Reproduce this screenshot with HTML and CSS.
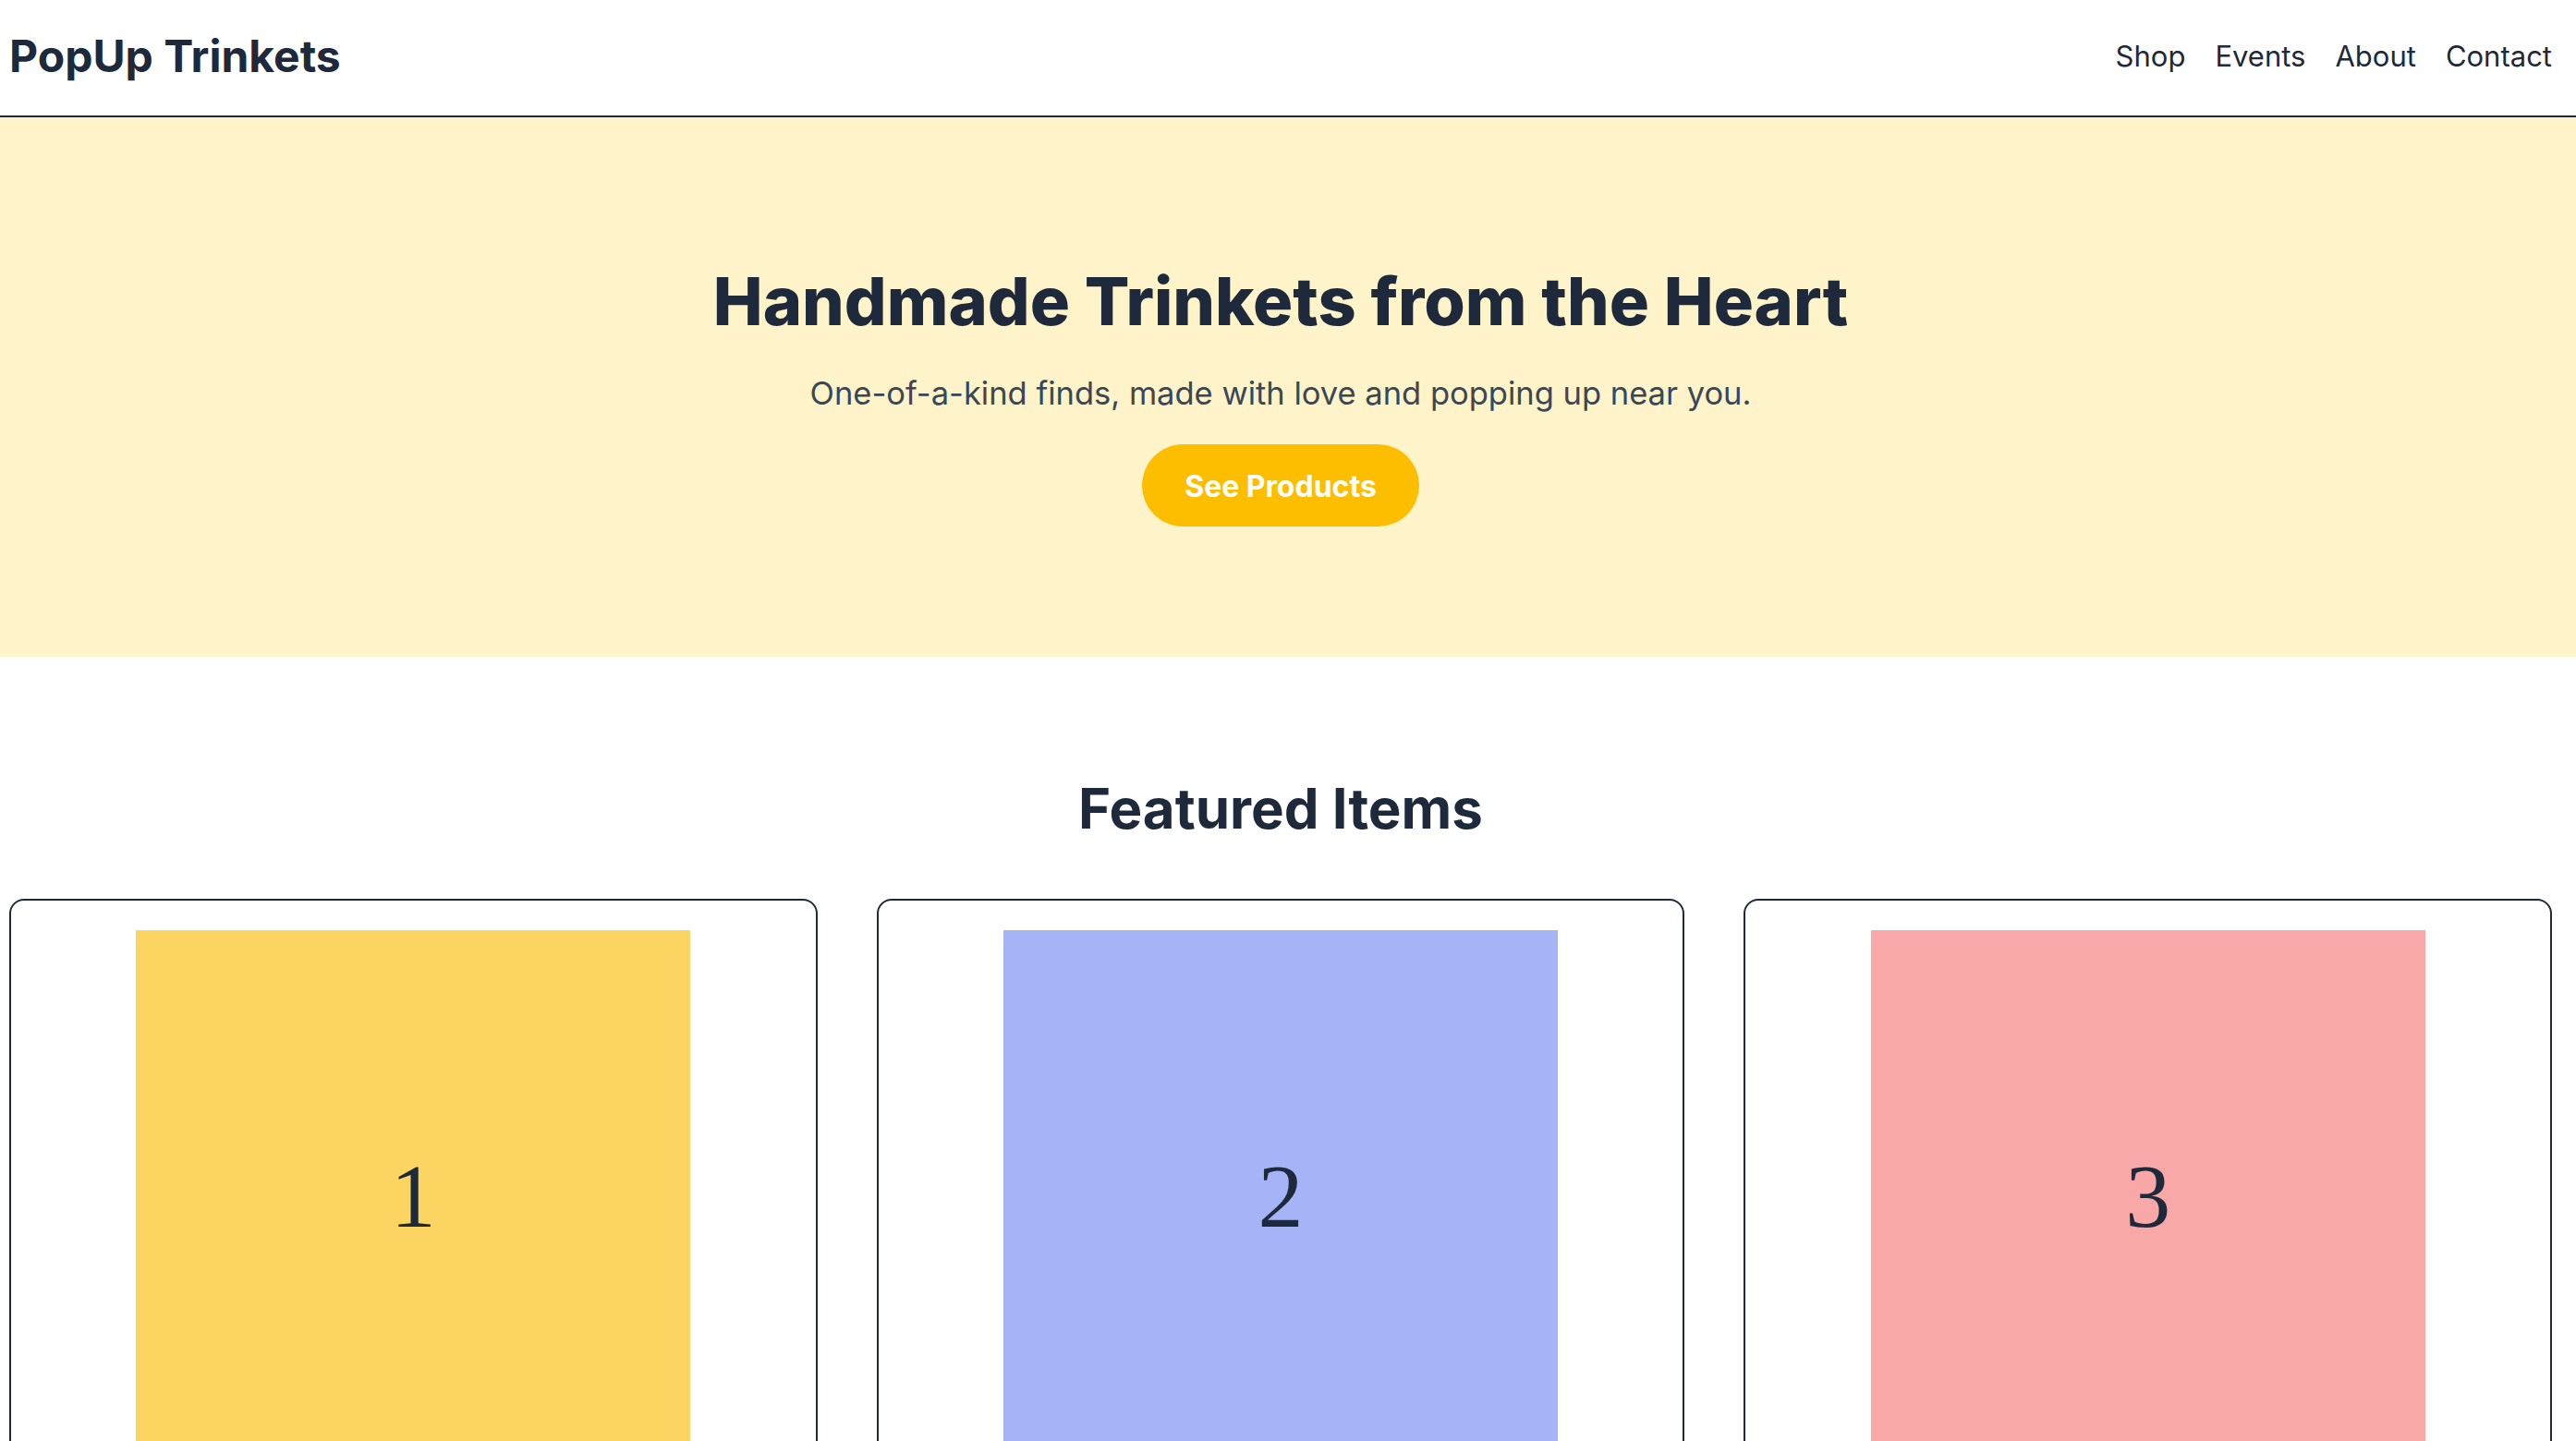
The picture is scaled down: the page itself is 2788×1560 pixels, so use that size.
FILE: index.html
```html
<!DOCTYPE html>
<html lang="en">
<head>
<meta charset="utf-8">
<title>PopUp Trinkets</title>
<link rel="stylesheet" href="styles.css">
</head>
<body>
<header class="site-header">
  <div class="logo">PopUp Trinkets</div>
  <nav class="nav">
    <a href="#">Shop</a>
    <a href="#">Events</a>
    <a href="#">About</a>
    <a href="#">Contact</a>
  </nav>
</header>
<section class="hero">
  <h1 class="hero-title">Handmade Trinkets from the Heart</h1>
  <p class="hero-sub">One-of-a-kind finds, made with love and popping up near you.</p>
  <a class="btn" href="#">See Products</a>
</section>
<section class="featured">
  <h2 class="featured-title">Featured Items</h2>
  <div class="cards">
    <div class="card"><div class="thumb thumb-1">1</div></div>
    <div class="card"><div class="thumb thumb-2">2</div></div>
    <div class="card"><div class="thumb thumb-3">3</div></div>
  </div>
</section>
</body>
</html>
```
FILE: styles.css
```css
* { box-sizing: border-box; }
html, body { margin: 0; padding: 0; }
body {
  font-family: Inter, "Noto Sans", sans-serif;
  color: #1e293b;
  background: #ffffff;
}
.site-header {
  height: 127px;
  display: flex;
  align-items: center;
  justify-content: space-between;
  padding: 0 26px 4px 10px;
  border-bottom: 2px solid #1e293b;
}
.logo {
  font-size: 48px;
  font-weight: 700;
}
.nav {
  display: flex;
  gap: 32px;
}
.nav a {
  color: #1e293b;
  text-decoration: none;
  font-size: 31px;
}
.hero {
  background: #fef3c9;
  padding: 156px 26px 141px 10px;
  display: flex;
  flex-direction: column;
  align-items: center;
  text-align: center;
}
.hero-title {
  margin: 0 0 30px;
  font-size: 72px;
  line-height: 1.2;
  font-weight: 800;
  letter-spacing: 0;
}
.hero-sub {
  margin: 0 0 28px;
  font-size: 34.5px;
  line-height: 54px;
  color: #3b4656;
}
.btn {
  display: inline-block;
  background: #fdbe00;
  color: #ffffff;
  font-weight: 700;
  font-size: 32px;
  line-height: 49px;
  padding: 21px 46px 19px;
  border-radius: 999px;
  text-decoration: none;
}
.featured {
  padding: 128px 26px 0 10px;
}
.featured-title {
  margin: 0 0 62px;
  text-align: center;
  font-size: 60px;
  line-height: 72px;
  font-weight: 700;
}
.cards {
  display: grid;
  grid-template-columns: repeat(3, 1fr);
  gap: 64px;
}
.card {
  border: 2px solid #1e293b;
  border-radius: 16px;
  padding: 32px 0;
  display: flex;
  justify-content: center;
  background: #fff;
}
.thumb {
  width: 600px;
  height: 600px;
  display: flex;
  align-items: center;
  justify-content: center;
  padding-bottom: 24px;
  font-family: "Liberation Serif", "Times New Roman", serif;
  font-size: 98px;
  color: #1e293b;
}
.thumb-1 { background: #fcd462; }
.thumb-2 { background: #a5b4f7; }
.thumb-3 { background: #f8a8a7; }
```
